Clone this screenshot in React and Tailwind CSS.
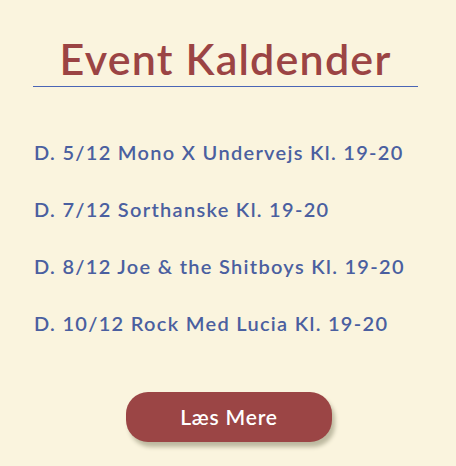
const EVENTS = [
  'D. 5/12 Mono X Undervejs Kl. 19-20',
  'D. 7/12 Sorthanske Kl. 19-20',
  'D. 8/12 Joe & the Shitboys Kl. 19-20',
  'D. 10/12 Rock Med Lucia Kl. 19-20',
];

export default function App() {
  return (
    <div className="w-[456px] h-[466px] bg-[#faf4de] font-['Lato',sans-serif] pt-[34px]">
      {/* Title */}
      <div className="mx-[33px] w-[385px] border-b border-[#4a65b5] pb-[2px]">
        <h1 className="text-center text-[43px] leading-[50px] tracking-[1.2px] font-semibold text-[#9b4444]">
          Event Kaldender
        </h1>
      </div>

      {/* Events */}
      <ul className="mt-[53px] pl-[34px] flex flex-col gap-[33px]">
        {EVENTS.map(ev => (
          <li key={ev} className="text-[20px] leading-[24px] tracking-[1.3px] font-semibold text-[#4a5fa0]">
            {ev}
          </li>
        ))}
      </ul>

      <div className="flex justify-center mt-[57px] pl-[2px]">
        <button className="w-[206px] h-[50px] rounded-[22px] bg-[#9b4545] text-white text-[21px] tracking-[0.8px] font-semibold shadow-[3px_5px_4px_#bdb9a0]">
          Læs Mere
        </button>
      </div>
    </div>
  );
}
